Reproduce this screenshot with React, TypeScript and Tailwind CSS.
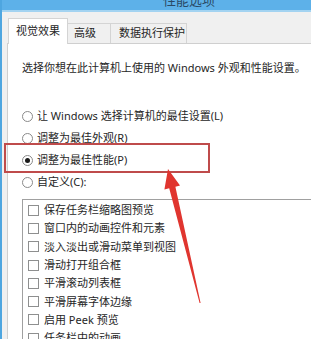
const cjk = { fontFamily: '"Noto Sans", "Noto Sans CJK SC", sans-serif' };

const radios = [
  { label: "让 Windows 选择计算机的最佳设置(L)", checked: false },
  { label: "调整为最佳外观(R)", checked: false },
  { label: "调整为最佳性能(P)", checked: true },
  { label: "自定义(C):", checked: false },
];

const options = [
  "保存任务栏缩略图预览",
  "窗口内的动画控件和元素",
  "淡入淡出或滑动菜单到视图",
  "滑动打开组合框",
  "平滑滚动列表框",
  "平滑屏幕字体边缘",
  "启用 Peek 预览",
  "任务栏中的动画",
];

const Radio = ({ checked }: { checked: boolean }) => (
  <div className="w-[11px] h-[11px] rounded-full border border-[#8a8a8a] bg-white flex items-center justify-center shrink-0">
    {checked && <div className="w-[5px] h-[5px] rounded-full bg-[#1a1a1a]" />}
  </div>
);

const App = () => {
  return (
    <div className="relative w-[311px] h-[339px] overflow-hidden bg-[#f0f0f0] flex text-[11px] text-[#262626]" style={cjk}>
      <div className="w-[2px] bg-[#4ea6e0] shrink-0" />
      <div className="flex-1 flex flex-col min-h-0">
        {/* title bar */}
        <div className="h-[12px] shrink-0 bg-[#5db1e9] border-b-2 border-[#a3d3f1] relative overflow-hidden">
          <div className="absolute left-[161px] top-[-8px] text-[13px] leading-[16px] text-[#2a4a66]">性能选项</div>
        </div>
        {/* tabs */}
        <div className="h-[31px] shrink-0 flex items-end pl-[6px]">
          <div className="h-[26px] px-[7px] pt-[4px] bg-white border border-b-0 border-[#d4d4d4] -mb-px relative z-10 leading-[16px]">视觉效果</div>
          <div className="h-[20px] w-[43px] pl-[6px] bg-[#f0f0f0] border border-l-0 border-b-0 border-[#d4d4d4] leading-[18px]">高级</div>
          <div className="h-[20px] w-[76px] pl-[8px] bg-[#f0f0f0] border border-l-0 border-b-0 border-[#d4d4d4] leading-[18px]">数据执行保护</div>
        </div>
        {/* panel */}
        <div className="flex-1 min-h-0 overflow-hidden ml-[5px] bg-white border-l border-t border-[#cfcfcf] flex flex-col pl-[14px]">
          <div className="mt-[17px] h-[14px] shrink-0 leading-[14px] whitespace-nowrap">
            选择你想在此计算机上使用的 Windows 外观和性能设置。
          </div>
          <div className="mt-[30px] shrink-0 flex flex-col">
            {radios.map((r) => (
              <div key={r.label} className="h-[22px] flex items-center gap-[4px] whitespace-nowrap">
                <Radio checked={r.checked} />
                <span className="leading-[14px]">{r.label}</span>
              </div>
            ))}
          </div>
          <div className="mt-[6px] shrink-0 border-l border-t border-[#a0a0a0] pl-[5px] pt-px">
            {options.map((o) => (
              <div key={o} className="h-[18.3px] flex items-center gap-[5px] whitespace-nowrap">
                <div className="w-[11px] h-[11px] border border-[#8e8f8f] bg-white shrink-0" />
                <span className="leading-[14px]">{o}</span>
              </div>
            ))}
          </div>
        </div>
      </div>

      {/* highlight box */}
      <div className="absolute left-[4px] top-[143px] w-[206px] h-[30px] border-2 border-[#bf4b4b]" />

      {/* arrow */}
      <svg className="absolute left-0 top-0" width="311" height="339" viewBox="0 0 311 339">
        <polygon
          points="168,169 180,185.6 175.4,186.8 200.6,303 199.6,303 169.2,188.2 164.4,189.4"
          fill="#e0352f"
        />
      </svg>
    </div>
  );
};

export default App;
